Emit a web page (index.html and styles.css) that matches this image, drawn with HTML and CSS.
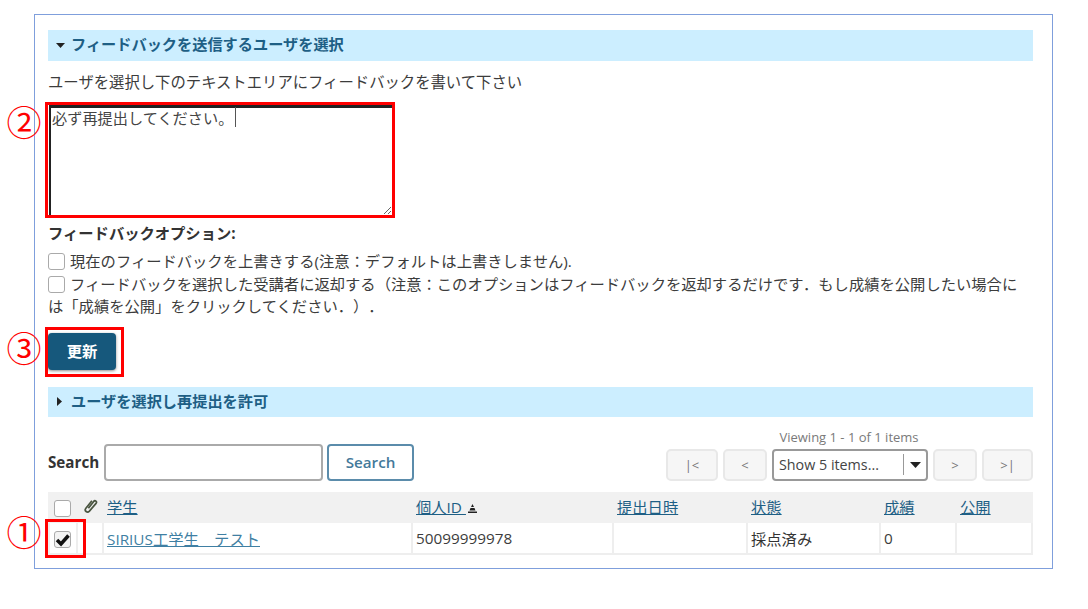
FILE: index.html
```html
<!DOCTYPE html>
<html lang="ja">
<head>
<meta charset="utf-8">
<title>フィードバック</title>
<link rel="stylesheet" href="styles.css">
</head>
<body>
<div class="page">
  <main class="panel">
    <h2 class="section"><svg class="caret" viewBox="0 0 9 5"><path d="M0 0H9L4.500 5Z"/></svg>フィードバックを送信するユーザを選択</h2>
    <p class="intro">ユーザを選択し下のテキストエリアにフィードバックを書いて下さい</p>
    <textarea class="feedback">必ず再提出してください。</textarea>
    <p class="opt-title">フィードバックオプション:</p>
    <div class="options">
      <div class="opt"><span class="check"></span>現在のフィードバックを上書きする(注意：デフォルトは上書きしません).</div>
      <div class="opt"><span class="check"></span>フィードバックを選択した受講者に返却する（注意：このオプションはフィードバックを返却するだけです．もし成績を公開したい場合には「成績を公開」をクリックしてください．）．</div>
    </div>
    <button class="update">更新</button>
    <h2 class="section second"><svg class="caret side" viewBox="0 0 5 9"><path d="M0 0V9L5 4.500Z"/></svg>ユーザを選択し再提出を許可</h2>
    <div class="toolbar">
      <div class="search">
        <label class="search-label">Search</label>
        <input class="search-input" type="text">
        <button class="search-btn">Search</button>
      </div>
      <div class="pager">
        <div class="viewing">Viewing 1 - 1 of 1 items</div>
        <div class="pager-row">
          <button class="pg pg-first">|&lt;</button>
          <button class="pg pg-prev">&lt;</button>
          <div class="select"><span class="select-text">Show 5 items...</span><span class="select-arrow"><svg viewBox="0 0 11 6"><path d="M0 0H11L5.500 6Z"/></svg></span></div>
          <button class="pg pg-next">&gt;</button>
          <button class="pg pg-last">&gt;|</button>
        </div>
      </div>
    </div>
    <table class="grid">
      <colgroup><col class="c1"><col class="c2"><col class="c3"><col class="c4"><col class="c5"><col class="c6"><col class="c7"><col class="c8"></colgroup>
      <thead>
        <tr>
          <th class="cb"><span class="check"></span></th>
          <th class="clip"><svg viewBox="0 0 14 14"><path d="M5 9.500 10 3.200C11.300 1.700 13.400 3.400 12.200 5L6 12.200C4 14.300 .8 12 2.700 9.500L8.300 2.500" /></svg></th>
          <th><a href="#">学生</a></th>
          <th><a href="#">個人ID </a><svg class="sort" viewBox="0 0 9 9"><path d="M4.500 0 6 3H3ZM2.500 4H6.500L7.500 6.500H1.500ZM0 7.500H9V9H0Z"/></svg></th>
          <th><a href="#">提出日時</a></th>
          <th><a href="#">状態</a></th>
          <th><a href="#">成績</a></th>
          <th><a href="#">公開</a></th>
        </tr>
      </thead>
      <tbody>
        <tr>
          <td class="cb"><span class="check checked"><svg viewBox="0 0 17 17"><path d="M3 9 7 13 14.500 4.500" /></svg></span></td>
          <td></td>
          <td><a class="name" href="#">SIRIUS工学生　テスト</a></td>
          <td>50099999978</td>
          <td></td>
          <td class="dark">採点済み</td>
          <td>0</td>
          <td></td>
        </tr>
      </tbody>
    </table>
  </main>
  <span class="text-caret"></span>
  <span class="mark mark-area"></span>
  <span class="mark mark-btn"></span>
  <span class="mark mark-row"></span>
  <span class="num num-2">②</span>
  <span class="num num-3">③</span>
  <span class="num num-1">①</span>
</div>
</body>
</html>
```
FILE: styles.css
```css
* { box-sizing: border-box; }
html, body { margin: 0; padding: 0; background: #fff; }
body {
  font-family: "Open Sans", "Noto Sans CJK JP", sans-serif;
  font-size: 15.3px;
  color: #3c3c3c;
  text-spacing-trim: space-all;
}
.page { position: relative; width: 1088px; height: 609px; overflow: hidden; padding: 14px 0 0 34px; }
.panel {
  width: 1019px;
  height: 555px;
  border: 1px solid #7f9fdc;
  padding: 15px 19px 0 13px;
}
.section {
  display: flex;
  align-items: center;
  height: 31px;
  margin: 0;
  padding: 0 0 5px 8px;
  background: #cceeff;
  color: #1e5f85;
  font-size: 15.2px;
  font-weight: 700;
}
.section.second { height: 30px; margin-top: 17px; padding-bottom: 3px; }
.caret { width: 9px; height: 5px; margin: 5px 6px 0 0; fill: #222; }
.caret.side { width: 5px; height: 9px; margin: 3px 9px 0 1px; }
.intro { margin: 10px 0 0; line-height: 22px; font-size: 15.350px; }
.feedback {
  display: block;
  width: 345px;
  height: 112px;
  margin: 12px 0 0 1px;
  padding: 1px 1px 0;
  border: 2px solid #222;
  border-top-width: 3px;
  border-radius: 0;
  outline: none;
  resize: both;
  font: inherit;
  font-size: 15.200px;
  line-height: 19px;
  color: #444;
  background: #fff;
}
.opt-title { margin: 5px 0 0; line-height: 22px; font-weight: 700; font-size: 15.300px; color: #333; }
.options { margin-top: 6px; padding-right: 5px; line-height: 22.500px; }
.check {
  display: inline-block;
  width: 17px;
  height: 17px;
  border: 1.500px solid #aaa;
  border-radius: 3px;
  background: #fff;
  vertical-align: -3px;
}
.opt .check { margin-right: 5px; }
.update {
  display: block;
  width: 68px;
  height: 37px;
  margin: 15px 0 0;
  padding: 0 0 2px;
  border: 0;
  border-radius: 4px;
  background: #16587c;
  box-shadow: 0 1px 3px rgba(0,0,0,.45);
  color: #fff;
  font: inherit;
  font-size: 15.300px;
  font-weight: 700;
}
.toolbar { display: flex; justify-content: space-between; align-items: flex-end; margin-top: 12px; }
.search { display: flex; align-items: center; }
.search-label { font-weight: 700; font-size: 15.200px; width: 56px; color: #333; }
.search-input {
  width: 219px;
  height: 37px;
  border: 2px solid #aaa;
  border-radius: 4px;
  outline: none;
  background: #fff;
}
.search-btn {
  width: 87px;
  height: 37px;
  margin-left: 4px;
  border: 2px solid #5b8cab;
  border-radius: 4px;
  background: #fff;
  color: #44799a;
  font: inherit;
  font-size: 15.200px;
  font-weight: 600;
}
.pager { display: flex; flex-direction: column; align-items: stretch; }
.viewing { text-align: center; font-size: 13px; line-height: 17px; color: #7a7a7a; margin: 0 0 3px 105px; width: 156px; white-space: nowrap; }
.pager-row { display: flex; gap: 5px; }
.pg {
  height: 32px;
  padding: 0;
  border: 2px solid #e8e8e8;
  border-radius: 5px;
  background: #f6f6f6;
  color: #777;
  font: inherit;
  font-size: 13px;
}
.pg-first { width: 52px; }
.pg-prev { width: 44px; }
.pg-next { width: 44px; }
.pg-last { width: 51px; }
.select {
  display: flex;
  align-items: center;
  justify-content: space-between;
  width: 156px;
  height: 32px;
  padding-left: 5px;
  border: 2px solid #999;
  border-radius: 4px;
  background: #fff;
  font-size: 14.300px;
  color: #444;
}
.select-arrow {
  display: flex;
  align-items: center;
  justify-content: center;
  width: 23px;
  height: 21px;
  border-left: 1px solid #999;
}
.select-arrow svg { width: 11px; height: 6px; fill: #222; }
.grid {
  width: 985px;
  margin-top: 11px;
  border-collapse: separate;
  border-spacing: 0;
  table-layout: fixed;
}
.c1 { width: 28px; } .c2 { width: 26px; } .c3 { width: 309px; } .c4 { width: 201px; }
.c5 { width: 134px; } .c6 { width: 133px; } .c7 { width: 76px; } .c8 { width: 78px; }
.grid th {
  height: 31px;
  padding: 0 0 3px 5px;
  background: #f1f1f1;
  font-weight: 400;
  text-align: left;
}
.grid td {
  height: 32px;
  padding: 0 0 0 3px;
  border-left: 2px solid #eee;
  border-bottom: 2px solid #eee;
}
.grid td:last-child { border-right: 2px solid #eee; }
.grid a { color: #1e5f85; }
.grid a.name { color: #3f7fa3; }
.grid th.cb { padding: 3px 0 0 6px; line-height: 0; }
.grid td.cb { padding: 3px 0 0 4px; line-height: 0; }
.grid th.clip { padding: 0 0 3px 7px; line-height: 0; }
.clip svg { width: 15px; height: 15px; fill: none; stroke: #4a5540; stroke-width: 1.600; }
.sort { width: 9px; height: 9px; fill: #222; margin-left: 2px; }
.check.checked { background: #f3f3f3; position: relative; }
.checked svg { position: absolute; left: -1px; top: -1px; width: 17px; height: 17px; fill: none; stroke: #111; stroke-width: 3.500; }
.dark { color: #333; }
.text-caret { position: absolute; left: 235px; top: 107px; width: 1px; height: 20px; background: #555; }
.mark { position: absolute; border: 3px solid #f00; }
.mark-area { left: 45px; top: 102px; width: 350px; height: 116px; }
.mark-btn { left: 45px; top: 327px; width: 79px; height: 50px; }
.mark-row { left: 45px; top: 519px; width: 41px; height: 39px; }
.num {
  position: absolute;
  left: 6px;
  width: 36px;
  text-align: center;
  font-family: "Noto Sans CJK JP", sans-serif;
  font-size: 35px;
  line-height: 36px;
  color: #f00;
}
.num-1 { top: 513px; }
.num-2 { top: 103px; }
.num-3 { top: 329px; }
```
